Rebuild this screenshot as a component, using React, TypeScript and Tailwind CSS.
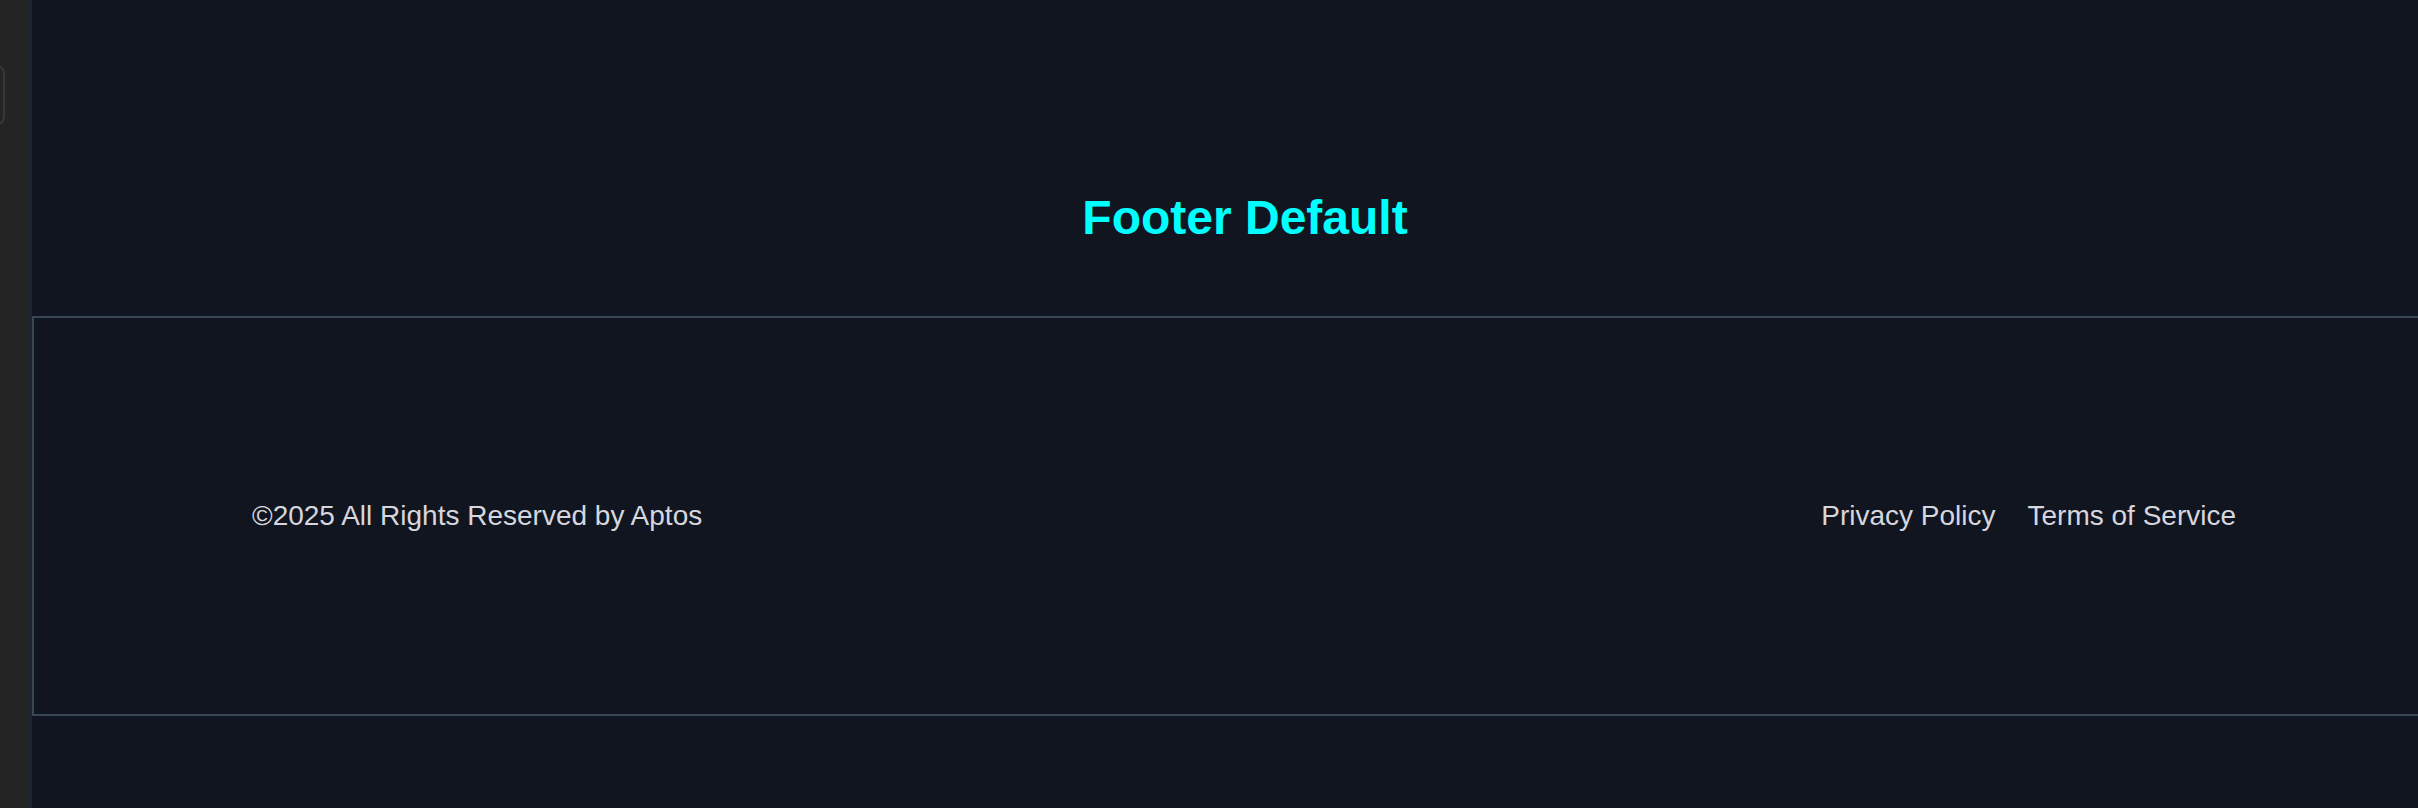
import React from 'react';

const font = { fontFamily: '"Liberation Sans", Arial, Helvetica, sans-serif' };

function Sidebar() {
  return (
    <aside className="w-[32px] shrink-0 bg-[#242424] border-r-2 border-[#1c2630] overflow-hidden pt-[65px]">
      <div className="-ml-[30px] w-[35px] h-[60px] rounded-lg border-2 border-[#383838]" />
    </aside>
  );
}

function Footer() {
  return (
    <footer className="h-[400px] border-t-2 border-b-2 border-l-2 border-[#374652] flex items-center justify-between pl-[218px] pr-[222px] text-[28px] text-[#d6d6de]">
      <p>©2025 All Rights Reserved by Aptos</p>
      <nav className="flex items-center gap-[32px]">
        <a href="#">Privacy Policy</a>
        <a href="#">Terms of Service</a>
      </nav>
    </footer>
  );
}

export default function App() {
  return (
    <div className="flex w-[2418px] h-[808px] overflow-hidden bg-[#111520]" style={font}>
      <Sidebar />
      <main className="w-[2426px] shrink-0 bg-[#111520]">
        <section className="pt-[194px] pb-[74px]">
          <h1 className="text-5xl leading-none font-bold text-[#00ffff] text-center">Footer Default</h1>
        </section>
        <Footer />
      </main>
    </div>
  );
}
